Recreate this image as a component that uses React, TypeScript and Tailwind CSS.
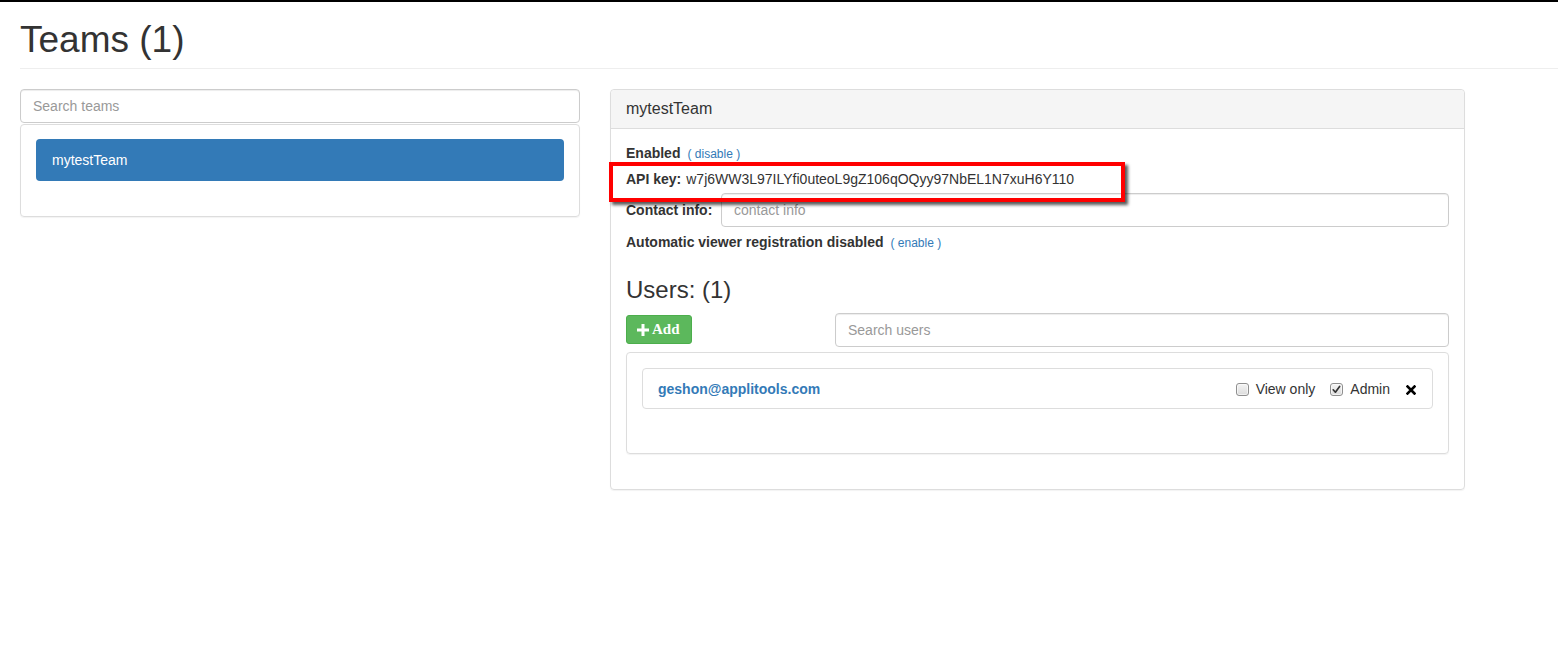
import React from "react";

function Box({ checked }: { checked?: boolean }) {
  return (
    <span className="relative inline-block h-[13px] w-[13px] rounded-[3px] border border-[#8f8f8f] bg-gradient-to-b from-[#f4f4f4] to-[#dcdcdc] shadow-[inset_0_0_0_1px_rgba(255,255,255,0.6)]">
      {checked && (
        <svg viewBox="0 0 13 13" className="absolute left-[-1px] top-[-1px] h-[13px] w-[13px]">
          <path d="M3.2 6.8 L5.4 9.2 L9.6 3.4" fill="none" stroke="#333" strokeWidth="1.7" strokeLinecap="round" strokeLinejoin="round" />
        </svg>
      )}
    </span>
  );
}

export default function App() {
  return (
    <div className="min-h-[646px] bg-white text-[#333] text-[14px]" style={{ fontFamily: '"Liberation Sans", Arial, Helvetica, sans-serif' }}>
      <div className="h-[2px] bg-black" />
      <div className="pl-[20px]">
        <h1 className="mt-[18px] mb-[20px] border-b border-[#eee] pb-[9px] text-[37px] font-normal leading-[39px] text-[#333]">
          Teams (1)
        </h1>
        <div className="flex items-start">
          {/* left column */}
          <div className="w-[560px]">
            <div className="flex h-[34px] items-center rounded-[4px] border border-[#ccc] px-[12px] shadow-[inset_0_1px_1px_rgba(0,0,0,0.075)]">
              <span className="text-[14px] text-[#999]">Search teams</span>
            </div>
            <div className="mt-[1px] rounded-[4px] border border-[#ddd] px-[15px] pb-[35px] pt-[14px] shadow-[0_1px_1px_rgba(0,0,0,0.05)]">
              <div className="flex h-[42px] items-center rounded-[4px] bg-[#337ab7] px-[16px] text-[14px] text-white">
                mytestTeam
              </div>
            </div>
          </div>

          {/* right column */}
          <div className="ml-[30px] w-[855px] rounded-[4px] border border-[#ddd] shadow-[0_1px_1px_rgba(0,0,0,0.05)]">
            <div className="rounded-t-[4px] border-b border-[#ddd] bg-[#f5f5f5] px-[15px] py-[10px] text-[16px] leading-[18px] text-[#333]">
              mytestTeam
            </div>
            <div className="px-[15px] pb-[35px] pt-[14px]">
              <div className="mb-[5px] leading-[20px]">
                <span className="font-bold">Enabled</span>
                <span className="ml-[7px] text-[12px] text-[#337ab7]">( disable )</span>
              </div>
              <div className="relative mb-[4px] leading-[20px]">
                <span className="font-bold">API key:</span>
                <span className="ml-[5px]">w7j6WW3L97ILYfi0uteoL9gZ106qOQyy97NbEL1N7xuH6Y110</span>
                <div className="pointer-events-none absolute left-[-17px] top-[-7px] h-[40px] w-[516px] border-[4px] border-[#ff0000] shadow-[3px_3px_3px_rgba(0,0,0,0.65)]" />
              </div>
              <div className="flex items-center">
                <span className="w-[95px] font-bold leading-[20px]">Contact info:</span>
                <div className="flex h-[34px] flex-1 items-center rounded-[4px] border border-[#ccc] px-[12px] shadow-[inset_0_1px_1px_rgba(0,0,0,0.075)]">
                  <span className="text-[14px] text-[#999]">contact info</span>
                </div>
              </div>
              <div className="mt-[5px] mb-[5px] leading-[20px]">
                <span className="font-bold">Automatic viewer registration disabled</span>
                <span className="ml-[7px] text-[12px] text-[#337ab7]">( enable )</span>
              </div>
              <h3 className="mt-[24px] mb-[10px] text-[24px] font-normal leading-[26px] text-[#333]">Users: (1)</h3>
              <div className="flex items-start">
                <div className="w-[209px] pt-[2px]">
                  <div className="inline-flex h-[29px] items-center rounded-[3px] border border-[#4cae4c] bg-[#5cb85c] pl-[10px] pr-[11px] text-white">
                    <svg viewBox="0 0 12 12" className="h-[12px] w-[12px]">
                      <path d="M4.5 0 H7.5 V4.5 H12 V7.5 H7.5 V12 H4.5 V7.5 H0 V4.5 H4.5 Z" fill="#fff" />
                    </svg>
                    <span className="ml-[3px] text-[15px] font-bold" style={{ fontFamily: '"Liberation Serif", "Times New Roman", serif' }}>Add</span>
                  </div>
                </div>
                <div className="flex h-[34px] flex-1 items-center rounded-[4px] border border-[#ccc] px-[12px] shadow-[inset_0_1px_1px_rgba(0,0,0,0.075)]">
                  <span className="text-[14px] text-[#999]">Search users</span>
                </div>
              </div>
              <div className="mt-[5px] rounded-[4px] border border-[#ddd] px-[15px] pb-[44px] pt-[15px] shadow-[0_1px_1px_rgba(0,0,0,0.05)]">
                <div className="flex h-[41px] items-center rounded-[4px] border border-[#ddd] pl-[15px] pr-[16px] pt-[2px]">
                  <span className="font-bold text-[#337ab7]">geshon@applitools.com</span>
                  <div className="ml-auto flex items-center">
                    <Box />
                    <span className="ml-[7px]">View only</span>
                    <span className="ml-[15px] flex items-center">
                      <Box checked />
                    </span>
                    <span className="ml-[7px]">Admin</span>
                    <svg viewBox="0 0 10 10" className="ml-[16px] h-[10px] w-[10px]">
                      <path d="M1.5 1.5 L8.5 8.5 M8.5 1.5 L1.5 8.5" stroke="#000" strokeWidth="2.6" strokeLinecap="square" />
                    </svg>
                  </div>
                </div>
              </div>
            </div>
          </div>
        </div>
      </div>
    </div>
  );
}
